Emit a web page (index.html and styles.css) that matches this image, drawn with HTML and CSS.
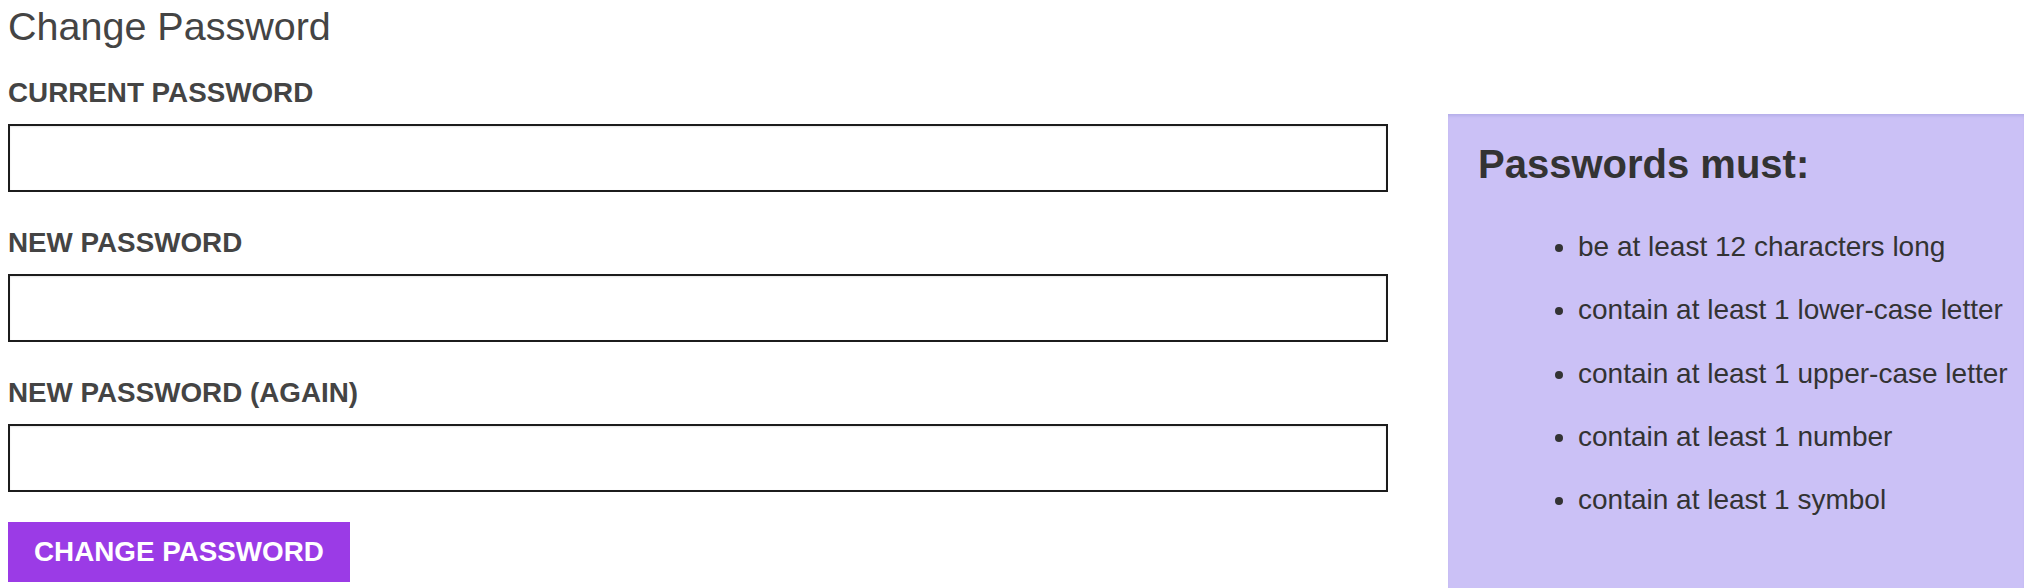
FILE: index.html
```html
<!DOCTYPE html>
<html lang="en">
<head>
<meta charset="utf-8">
<title>Change Password</title>
<link rel="stylesheet" href="styles.css">
</head>
<body>
<div class="page">
  <form class="form-col" onsubmit="return false">
    <h2 class="title">Change Password</h2>
    <div class="field first">
      <label class="label" for="cur">CURRENT PASSWORD</label>
      <input class="input" id="cur" type="password">
    </div>
    <div class="field">
      <label class="label" for="new1">NEW PASSWORD</label>
      <input class="input" id="new1" type="password">
    </div>
    <div class="field">
      <label class="label" for="new2">NEW PASSWORD (AGAIN)</label>
      <input class="input" id="new2" type="password">
    </div>
    <button class="btn" type="submit">CHANGE PASSWORD</button>
  </form>
  <aside class="rules">
    <h3 class="rules-title">Passwords must:</h3>
    <ul class="rules-list">
      <li>be at least 12 characters long</li>
      <li>contain at least 1 lower-case letter</li>
      <li>contain at least 1 upper-case letter</li>
      <li>contain at least 1 number</li>
      <li>contain at least 1 symbol</li>
    </ul>
  </aside>
</div>
</body>
</html>
```
FILE: styles.css
```css
html, body {
  margin: 0;
  padding: 0;
  background: #ffffff;
}

body {
  font-family: "Liberation Sans", Arial, Helvetica, sans-serif;
  color: #444444;
}

.page {
  display: flex;
  align-items: flex-start;
  padding-left: 8px;
}

.form-col {
  width: 1380px;
  flex: none;
  display: flex;
  flex-direction: column;
  align-items: flex-start;
}

.title {
  margin: 0;
  padding-top: 3px;
  font-size: 39.5px;
  line-height: 46px;
  font-weight: normal;
  color: #444444;
}

.field {
  width: 100%;
  display: flex;
  flex-direction: column;
  margin-top: 35px;
}

.field.first {
  margin-top: 28px;
}

.label {
  display: block;
  font-size: 27.8px;
  line-height: 32px;
  font-weight: bold;
  color: #444444;
}

.input {
  display: block;
  box-sizing: border-box;
  width: 100%;
  height: 68px;
  margin: 15px 0 0;
  border: 2px solid #1c1c1c;
  border-radius: 0;
  background: #ffffff;
  box-shadow: inset 0 1px 2px rgba(0, 0, 0, 0.1);
  font: inherit;
  outline: none;
}

.btn {
  margin-top: 30px;
  height: 60px;
  padding: 0 26px;
  border: none;
  border-radius: 0;
  background: #9b3be6;
  color: #ffffff;
  font-family: "Liberation Sans", Arial, Helvetica, sans-serif;
  font-size: 27.8px;
  font-weight: bold;
  line-height: 60px;
  cursor: pointer;
}

.rules {
  flex: 1;
  min-width: 0;
  margin-left: 60px;
  margin-top: 114px;
  min-height: 520px;
  box-sizing: border-box;
  padding: 27px 0 40px 30px;
  background: #cbc1f6;
  box-shadow: inset 0 3px 3px -1px rgba(70, 80, 170, 0.16);
  color: #333333;
}

.rules-title {
  margin: 0;
  font-size: 40px;
  line-height: 46px;
  font-weight: bold;
  color: #333333;
}

.rules-list {
  margin: 44px 0 0;
  padding-left: 100px;
  font-size: 28px;
  line-height: 32px;
  color: #333333;
  white-space: nowrap;
}

.rules-list li + li {
  margin-top: 31.3px;
}
```
